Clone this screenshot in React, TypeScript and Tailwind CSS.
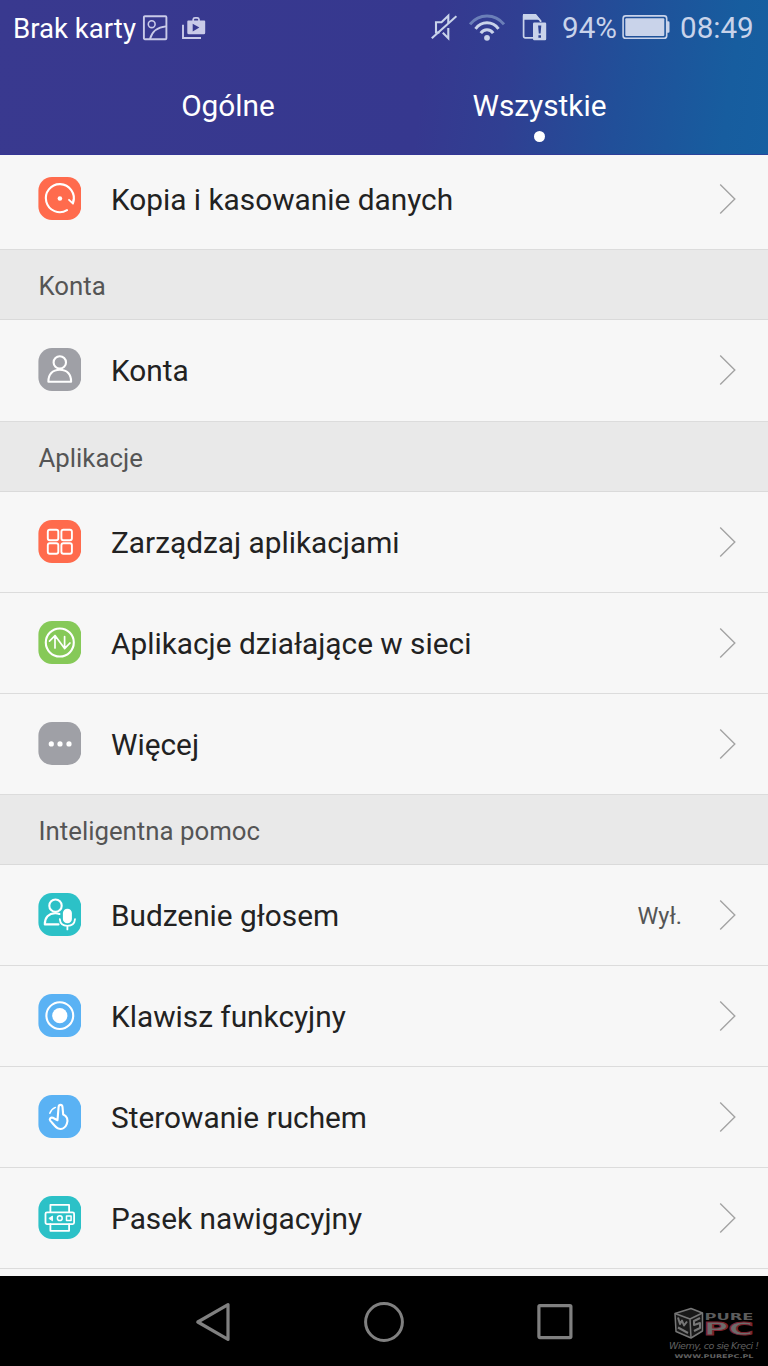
import React from 'react';
import clsx from 'clsx';

type IconProps = { color: string; children: React.ReactNode };

const TileIcon: React.FC<IconProps> = ({ color, children }) => (
  <svg
    width="43"
    height="43"
    viewBox="0 0 43 43"
    fill="none"
    stroke="#fff"
    strokeWidth="2.1"
    strokeLinecap="round"
    strokeLinejoin="round"
    className="shrink-0"
  >
    <rect x="0.4" width="42.8" height="43" rx="13.5" fill={color} stroke="none" />
    {children}
  </svg>
);

const BackupIcon = () => (
  <TileIcon color="#ff6b4d">
    <path d="M29 33.2A14 14 0 1 1 35.2 25.4" />
    <path d="M31 22.8L35 26.7L35.6 22.4" strokeWidth="1.8" />
    <circle cx="21.9" cy="21.5" r="2.3" fill="#fff" stroke="none" />
  </TileIcon>
);

const AccountIcon = () => (
  <TileIcon color="#9fa0a6">
    <circle cx="21.8" cy="14.4" r="6.2" />
    <path d="M10.4 33.8C10.2 26.3 14.5 21.8 21.8 21.8S33.3 26.3 33.1 33.8Z" />
  </TileIcon>
);

const AppsIcon = () => (
  <TileIcon color="#ff6b4d">
    <g strokeWidth="1.9">
      <rect x="9.8" y="9.7" width="10.5" height="10.5" rx="2" />
      <rect x="23.4" y="9.7" width="10.5" height="10.5" rx="2" />
      <rect x="9.8" y="23.2" width="10.5" height="10.5" rx="2" />
      <rect x="23.4" y="23.2" width="10.5" height="10.5" rx="2" />
    </g>
  </TileIcon>
);

const NetworkIcon = () => (
  <TileIcon color="#86c958">
    <circle cx="21.8" cy="21.5" r="14" />
    <path d="M17 27V14.6M11.5 20.2L17 14.6L26.6 27.6M26.6 15.5V27.6L32 22" strokeWidth="1.7" />
  </TileIcon>
);

const MoreIcon = () => (
  <TileIcon color="#9fa0a6">
    <g fill="#fff" stroke="none">
      <circle cx="13.3" cy="21.9" r="2.6" />
      <circle cx="22" cy="21.9" r="2.6" />
      <circle cx="31" cy="21.9" r="2.6" />
    </g>
  </TileIcon>
);

const VoiceIcon = () => (
  <TileIcon color="#2cc1c7">
    <circle cx="17.5" cy="12.7" r="6.2" />
    <path d="M20.5 31.4H6.8C6.6 24.6 10.8 20.2 17.2 20.2C18.8 20.2 20.2 20.5 21.4 21" />
    <rect x="24.9" y="15.7" width="9" height="14.6" rx="4.4" fill="#fff" stroke="none" />
    <path d="M21.8 26.2C22.2 30.5 25.2 32.9 29.4 32.9S36.6 30.5 37 26.2M29.4 33V36.4" strokeWidth="1.8" />
  </TileIcon>
);

const KeyIcon = () => (
  <TileIcon color="#5ab2f4">
    <circle cx="21.8" cy="21.6" r="13.4" />
    <circle cx="21.8" cy="21.6" r="7.6" fill="#fff" stroke="none" />
  </TileIcon>
);

const MotionIcon = () => (
  <TileIcon color="#5ab2f4">
    <path d="M19.5 25.2L20.6 12C20.8 9.2 24.2 9.2 24.5 12L25.2 19.6C29 21 30.4 24.6 28.8 28.8C27.4 32.8 24 34.6 20.4 33.6C17.8 32.8 15 28.6 12.2 25.6C11 23.8 12.8 22 14.8 22.8Z" />
    <path d="M11.8 18.2C12.8 15.4 14.8 13.4 17.4 12.4" strokeWidth="1.5" />
  </TileIcon>
);

const NavBarIcon = () => (
  <TileIcon color="#2cc1c7">
    <g strokeWidth="1.8">
      <path d="M12.4 16V8.8H31.1V16M12.4 28.2V34.8H31.1V28.2" />
      <rect x="7.5" y="16.3" width="28.6" height="11.8" rx="1.5" />
      <path d="M11.2 22.2L14.5 20V24.4Z" fill="#fff" strokeWidth="0.9" />
      <circle cx="21.8" cy="22.2" r="2.4" strokeWidth="1.5" />
      <rect x="28.5" y="19.9" width="4.6" height="4.6" strokeWidth="1.5" />
    </g>
  </TileIcon>
);

const Chevron = () => (
  <svg width="18" height="32" viewBox="0 0 18 32" fill="none" stroke="#a3a3a3" strokeWidth="1.4" className="shrink-0">
    <path d="M1.2 1.5L15.8 16L1.2 30.5" />
  </svg>
);

interface RowProps {
  icon: React.ReactNode;
  label: string;
  value?: string;
  last?: boolean;
}

const Row: React.FC<RowProps> = ({ icon, label, value, last }) => (
  <div
    className={clsx(
      'flex shrink-0 items-center border-b border-[#dcdcdc] pr-[31px] pl-[38px]',
      last ? 'h-[102px] pb-[2px]' : 'h-[101px] pb-px'
    )}
  >
    {icon}
    <span className="ml-[30px] flex-1 pt-[3px] text-[29.8px] leading-9 text-[#222]">{label}</span>
    {value && <span className="mr-[37px] pt-[3px] text-[23.5px] leading-8 text-[#555]">{value}</span>}
    <Chevron />
  </div>
);

const SectionTitle: React.FC<{ children: string }> = ({ children }) => (
  <div className="flex h-[70px] shrink-0 items-center border-b border-[#dadada] bg-[#e9e9e9] pt-[3px] pl-[38.5px] text-[25.8px] text-[#555]">
    {children}
  </div>
);

const StatusBar = () => (
  <div className="flex h-14 items-center pr-[13px] pl-[13px] text-[29.6px] leading-9 text-[#c9d3ea]">
    <span className="w-[129px] whitespace-nowrap pt-px text-[27.6px] text-white">Brak karty</span>
    {/* screenshot */}
    <svg width="26" height="26" viewBox="0 0 26 26" fill="none" stroke="#c9cae8" strokeWidth="1.9" className="-mt-px">
      <rect x="1.9" y="1.2" width="22.5" height="23" rx="1" />
      <circle cx="9.7" cy="9.2" r="3.4" strokeWidth="1.6" />
      <path d="M8 24C10 16.5 14.5 12.2 24 11.4" />
    </svg>
    {/* store updates */}
    <svg width="24" height="24" viewBox="0 0 24 24" fill="none" className="-mt-px ml-[14px]">
      <path d="M1 8.8V22H19" stroke="#c9cae8" strokeWidth="1.9" />
      <path d="M11.2 5V3.4A1.8 1.8 0 0 1 13 1.8H15.2A1.8 1.8 0 0 1 17 3.4V5" stroke="#c9cae8" strokeWidth="1.7" />
      <path fillRule="evenodd" d="M6.4 4.6H22.2A1 1 0 0 1 23.2 5.6V16.8A1.5 1.5 0 0 1 21.7 18.3H6.8A1.5 1.5 0 0 1 5.3 16.8V5.6A1 1 0 0 1 6.4 4.6ZM10.7 7.8V15.4L17.4 11.5Z" fill="#c9cae8" />
    </svg>
    <div className="flex-1" />
    {/* muted */}
    <svg width="26" height="28" viewBox="0 0 26 28" fill="none" stroke="#c9d3ea" strokeWidth="2.1" className="-mt-[2px]">
      <path d="M8.5 19.5H5V9.2H10.5L17.3 2.8V10.5M17.3 15V25.2L11.8 19.8" />
      <path d="M0.8 25.2L25.4 3.2" />
    </svg>
    {/* wifi */}
    <svg width="36" height="28" viewBox="0 0 36 28" fill="none" strokeWidth="3" className="-mt-px ml-[12px]">
      <path d="M1 10.3C10 -0.9 26 -0.9 35 10.3" stroke="#6b7fb8" />
      <path d="M6.5 14.8C12.5 6.8 23.5 6.8 29.5 14.8M11.8 19.2C15 14.6 21 14.6 24.2 19.2" stroke="#c9d3ea" />
      <circle cx="18" cy="23.8" r="2.9" fill="#c9d3ea" />
    </svg>
    {/* sim warning */}
    <svg width="26" height="28" viewBox="0 0 26 28" fill="none" className="-mt-[2px] ml-[17px]">
      <path d="M11 24.8H3.2A1.6 1.6 0 0 1 1.6 23.2V3H13.8L18.6 7.8V9" stroke="#c9d3ea" strokeWidth="1.7" />
      <path d="M1 1H14L18.6 6.8H1Z" fill="#c9d3ea" />
      <path fillRule="evenodd" d="M12.2 9.6H23A1.2 1.2 0 0 1 24.2 10.8V26A1.2 1.2 0 0 1 23 27.2H12.2A1.2 1.2 0 0 1 11 26V10.8A1.2 1.2 0 0 1 12.2 9.6ZM16.1 12.4L16.8 20.6H18.6L19.3 12.4ZM16.4 22.2V24.8H19V22.2Z" fill="#c9d3ea" />
    </svg>
    <span className="ml-[14px] w-[55px] whitespace-nowrap">94%</span>
    <svg width="48" height="26" viewBox="0 0 48 26" fill="none" className="-mt-[2px] ml-[5px]">
      <rect x="1.1" y="1.9" width="43.6" height="22.4" rx="2.6" stroke="#c9d3ea" strokeWidth="1.6" />
      <rect x="3.3" y="4.2" width="39" height="17.8" rx="1" fill="#c9d3ea" />
      <path d="M44.8 7.3H46.3A1.2 1.2 0 0 1 47.5 8.5V17.5A1.2 1.2 0 0 1 46.3 18.7H44.8Z" fill="#c9d3ea" />
    </svg>
    <span className="ml-[10px] w-[75px] whitespace-nowrap">08:49</span>
  </div>
);

const Watermark = () => (
  <svg width="94" height="56" viewBox="0 0 94 56" className="absolute right-[5px] bottom-[5px]">
    <g fill="none" stroke="#777" strokeWidth="1.5" strokeLinejoin="round">
      <path d="M6 8.5L22 3.5L33.5 8V26L22 33L7 26.5Z" fill="#191919" />
      <path d="M6 8.5L21 14L33.5 8M21 14L22 33" />
      <path d="M9 12.5L11 19L13 15.5L15 20.5L18 16.5M9 22.5L19 28M31 13L25 16V20L31 18V23L25 26" strokeWidth="2" />
    </g>
    <g className="font-['DejaVu_Sans']" fontWeight="bold">
      <text x="35.5" y="14.5" fontSize="8.5" textLength="49" lengthAdjust="spacingAndGlyphs" fill="#5c5c5c">PURE</text>
      <text x="34.5" y="29.8" fontSize="17" textLength="50" lengthAdjust="spacingAndGlyphs" fill="#6c6c6c" stroke="#7c2431" strokeWidth="0.9">PC</text>
    </g>
    <text x="0" y="43.5" fontSize="9.5" textLength="90" className="font-['DejaVu_Sans'] italic" fill="#606060">Wiemy, co się Kręci !</text>
    <text x="5.5" y="52.5" fontSize="5" textLength="79" lengthAdjust="spacingAndGlyphs" fontWeight="bold" className="font-['DejaVu_Sans']" fill="#606060">WWW.PUREPC.PL</text>
  </svg>
);

export default function App() {
  return (
    <div className="flex h-[1366px] w-[768px] flex-col overflow-hidden bg-[#f7f7f7] font-['Roboto',sans-serif]">
      <header className="h-[155px] shrink-0 border-b border-[#33359a]/60 bg-[linear-gradient(98deg,#39398f_0%,#36388f_55%,#303f92_66%,#214f99_80%,#175d9f_94%,#165fa1_100%)]">
        <StatusBar />
        <div className="grid h-[98px] grid-cols-2 px-[72px] pt-[32px] text-center text-[29.8px] leading-9 text-white">
          <span>Ogólne</span>
          <div className="flex flex-col items-center pr-px">
            <span>Wszystkie</span>
            <span className="mt-[7px] size-[11px] rounded-full bg-white" />
          </div>
        </div>
      </header>

      <main className="flex min-h-0 flex-1 flex-col overflow-hidden">
        <div className="-mt-[6px] flex shrink-0 flex-col">
          <Row icon={<BackupIcon />} label="Kopia i kasowanie danych" />
          <SectionTitle>Konta</SectionTitle>
          <Row icon={<AccountIcon />} label="Konta" last />
          <SectionTitle>Aplikacje</SectionTitle>
          <Row icon={<AppsIcon />} label="Zarządzaj aplikacjami" />
          <Row icon={<NetworkIcon />} label="Aplikacje działające w sieci" />
          <Row icon={<MoreIcon />} label="Więcej" />
          <SectionTitle>Inteligentna pomoc</SectionTitle>
          <Row icon={<VoiceIcon />} label="Budzenie głosem" value="Wył." />
          <Row icon={<KeyIcon />} label="Klawisz funkcyjny" />
          <Row icon={<MotionIcon />} label="Sterowanie ruchem" />
          <Row icon={<NavBarIcon />} label="Pasek nawigacyjny" />
        </div>
      </main>

      <nav className="relative flex h-[90px] shrink-0 items-center justify-center bg-black pt-[2px]">
        <svg width="36" height="42" viewBox="0 0 36 42" fill="none" stroke="#808080" strokeWidth="3.2" strokeLinejoin="round">
          <path d="M2.8 21L33 3.6V38.4Z" />
        </svg>
        <svg width="42" height="42" viewBox="0 0 42 42" fill="none" stroke="#808080" strokeWidth="3" className="ml-[132px]">
          <circle cx="21" cy="21" r="18.4" />
        </svg>
        <svg width="36" height="42" viewBox="0 0 36 42" fill="none" stroke="#808080" strokeWidth="3.2" strokeLinejoin="round" className="ml-[132px]">
          <rect x="1.9" y="4.6" width="32" height="32" rx="1" />
        </svg>
        <Watermark />
      </nav>
    </div>
  );
}
